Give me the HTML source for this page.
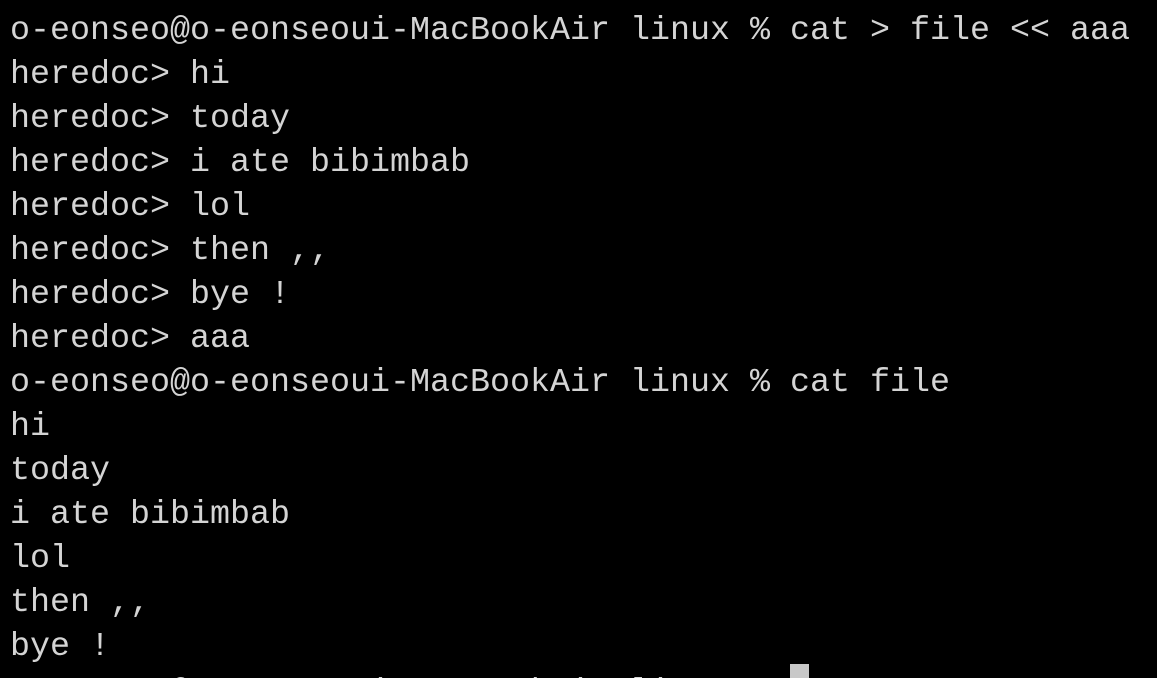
<!DOCTYPE html>
<html><head><meta charset="utf-8"><style>
html,body{margin:0;padding:0;background:#000;width:1157px;height:678px;overflow:hidden}
pre{margin:0;padding:9px 0 0 10px;font-family:"Liberation Mono",monospace;font-size:33.33px;line-height:44px;color:#d4d4d4;white-space:pre}
.c{display:inline-block;width:19px;height:40px;background:#c8c8c8;vertical-align:-8px;position:relative;top:-5px}
</style></head><body><pre>o-eonseo@o-eonseoui-MacBookAir linux % cat &gt; file &lt;&lt; aaa
heredoc&gt; hi
heredoc&gt; today
heredoc&gt; i ate bibimbab
heredoc&gt; lol
heredoc&gt; then ,,
heredoc&gt; bye !
heredoc&gt; aaa
o-eonseo@o-eonseoui-MacBookAir linux % cat file
hi
today
i ate bibimbab
lol
then ,,
bye !
o-eonseo@o-eonseoui-MacBookAir linux % <span class="c"></span></pre></body></html>
